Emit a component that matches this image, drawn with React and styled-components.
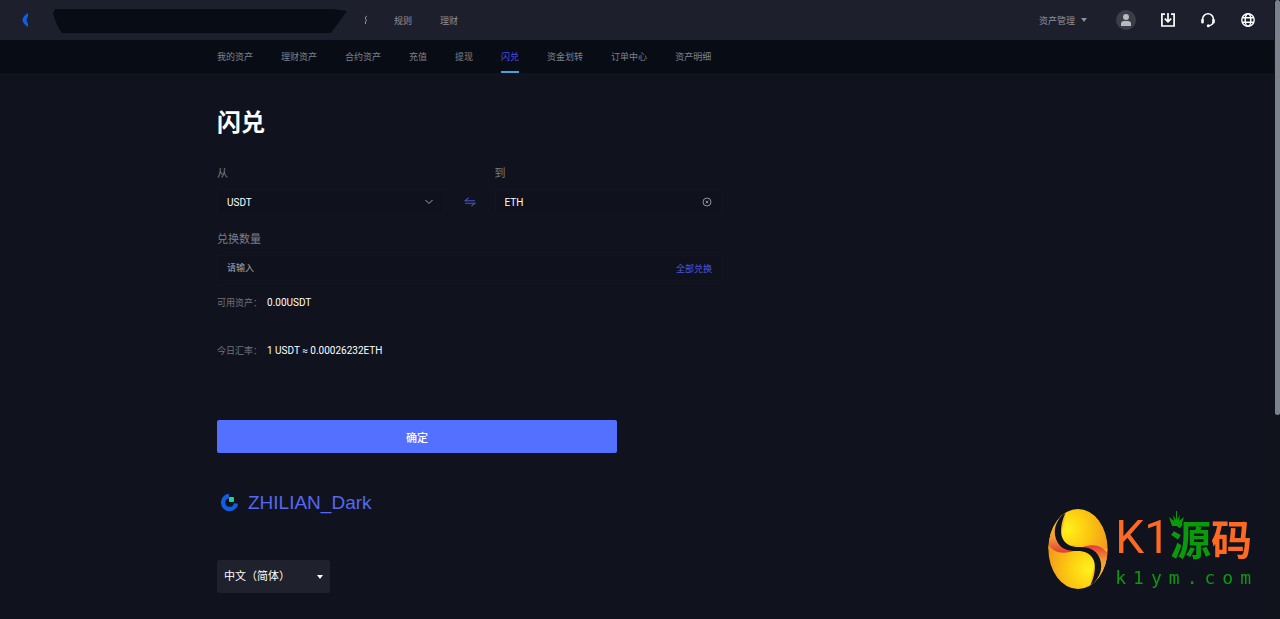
import React, { useState } from 'react';
import styled, { createGlobalStyle } from 'styled-components';

const GlobalStyle = createGlobalStyle`
  * {
    box-sizing: border-box;
  }

  body {
    margin: 0;
    background: #10131e;
    color: #ffffff;
    font-family: Roboto, 'Noto Sans CJK SC', sans-serif;
    font-size: 10px;
  }

  button, input, select {
    font: inherit;
    color: inherit;
    margin: 0;
    padding: 0;
    border: 0;
    background: none;
    outline: none;
  }

  button, select {
    cursor: pointer;
  }

  a {
    color: inherit;
    text-decoration: none;
  }
`;

const Layout = styled.div`
  display: flex;
  min-height: 100vh;
`;

const Page = styled.div`
  flex: 1;
  min-width: 0;
`;

const ScrollRail = styled.div`
  width: 6px;
  padding-left: 1px;
  background: #10131c;
`;

const ScrollThumb = styled.div`
  height: 67vh;
  border-radius: 3px;
  background: #7c828d;
`;

const TopBar = styled.header`
  display: flex;
  align-items: center;
  justify-content: space-between;
  height: 40px;
  padding: 0 18px 0 22px;
  background: #1e1f2d;
  color: #8d8f9b;
  font-size: 9px;
`;

const TopGroup = styled.div`
  display: flex;
  align-items: center;
`;

const TopLinks = styled.nav`
  display: flex;
  gap: 28px;
  margin-left: 26px;
`;

const LogoMark = styled.svg`
  width: 6px;
  height: 14px;
  margin-right: 25px;
`;

const NavPlate = styled.svg`
  width: 294px;
  height: 26px;
`;

const BraceMark = styled.svg`
  width: 4px;
  height: 10px;
  margin-left: 17px;
`;

const AssetMenu = styled.button`
  display: flex;
  align-items: center;
  gap: 6px;
  margin-right: 29px;
`;

const Caret = styled.span`
  border: 3px solid transparent;
  border-top: 4px solid currentColor;
  border-bottom: 0;
`;

const TopIcons = styled.div`
  display: flex;
  align-items: center;
  gap: 24px;
  color: #ffffff;
`;

const IconButton = styled.button`
  display: flex;
  align-items: center;
  justify-content: center;
`;

const Avatar = styled(IconButton)`
  width: 20px;
  height: 20px;
  border-radius: 50%;
  background: #3b3d49;
  color: #b9bac0;
`;

const SubNav = styled.nav`
  background: #080c14;
`;

const SubNavInner = styled.div`
  display: flex;
  gap: 28px;
  max-width: 840px;
  height: 33px;
  margin: 0 auto;
`;

const SubLink = styled.a`
  display: flex;
  align-items: center;
  border-top: 2px solid transparent;
  border-bottom: 2px solid ${({ $active }) => ($active ? '#4a9fe0' : 'transparent')};
  color: ${({ $active }) => ($active ? '#4b4ff0' : '#7f828c')};
  font-size: 9px;
  white-space: nowrap;
`;

const Main = styled.main`
  max-width: 840px;
  margin: 0 auto;
  padding: 32px 0 24px;
`;

const Title = styled.h1`
  margin: 0 0 24px;
  font-size: 24px;
  line-height: 36px;
  font-weight: 700;
`;

const Form = styled.form`
  max-width: 505px;
`;

const PairRow = styled.div`
  display: grid;
  grid-template-columns: 1fr 50px 1fr;
  align-items: end;
  margin-bottom: 16px;
`;

const Label = styled.label`
  display: block;
  margin-bottom: 6px;
  color: #7b7d88;
  font-size: 11px;
  line-height: 18px;
`;

const Field = styled.div`
  display: flex;
  align-items: center;
  height: 26px;
  padding: 0 9px;
  border: 1px solid #131621;
  border-radius: 2px;
  background: #0f121d;
`;

const CoinSelect = styled.select`
  flex: 1;
  min-width: 0;
  appearance: none;

  option {
    background: #1e1f2d;
  }
`;

const AmountInput = styled.input`
  flex: 1;
  min-width: 0;
  font-size: 9px;

  &::placeholder {
    color: #a3a5ac;
    opacity: 1;
  }
`;

const SwapButton = styled(IconButton)`
  height: 26px;
  color: #4a54c8;
`;

const AllButton = styled.button`
  color: #5156d6;
  font-size: 9px;
`;

const InfoRow = styled.p`
  display: flex;
  gap: 5px;
  margin: ${({ $gap }) => $gap}px 0 0;
  line-height: 18px;
`;

const InfoLabel = styled.span`
  color: #70727d;
  font-size: 9px;
`;

const Submit = styled.button`
  display: block;
  width: 400px;
  max-width: 100%;
  height: 33px;
  margin-top: 60px;
  border-radius: 2px;
  background: #5470ff;
  font-size: 11px;
  font-weight: 500;
`;

const Footer = styled.footer`
  margin-top: 36px;
`;

const Brand = styled.a`
  display: flex;
  align-items: center;
  gap: 9px;
  padding-left: 3px;
  color: #5468f0;
  font-family: 'Liberation Sans', Arial, sans-serif;
  font-size: 19px;
  line-height: 28px;
`;

const Language = styled.div`
  display: flex;
  align-items: center;
  width: 113px;
  height: 33px;
  margin-top: 43px;
  padding: 0 7px;
  border-radius: 2px;
  background: #1f212c;
`;

const LanguageSelect = styled.select`
  flex: 1;
  min-width: 0;
  appearance: none;
  font-size: 11px;
`;

const Watermark = styled.div`
  position: fixed;
  right: 28px;
  bottom: 29px;
  display: flex;
  align-items: center;
  gap: 7px;
  pointer-events: none;
`;

const WatermarkName = styled.div`
  position: relative;
  display: flex;
  align-items: center;
  height: 58px;
  color: #ff6a22;
  font-size: 46px;
  line-height: 58px;
`;

const WatermarkHan = styled.span`
  color: ${({ $green }) => ($green ? '#0b9a0b' : 'inherit')};
  font-family: 'Noto Sans CJK SC', sans-serif;
  font-size: 41px;
  font-weight: 700;
`;

const Crown = styled.svg`
  position: absolute;
  right: 68px;
  top: 3px;
`;

const WatermarkSite = styled.div`
  margin-right: -7px;
  color: #0b9a0b;
  font-family: 'DejaVu Sans Mono', monospace;
  font-size: 18px;
  line-height: 24px;
  letter-spacing: 7px;
`;

const links = ['我的资产', '理财资产', '合约资产', '充值', '提现', '闪兑', '资金划转', '订单中心', '资产明细'];

function UserIcon() {
  return (
    <svg width="12" height="12" viewBox="0 0 12 12" fill="currentColor">
      <circle cx="6" cy="3" r="3" />
      <path d="M1 12V10Q1 7 4 7H8Q11 7 11 10V12Z" />
    </svg>
  );
}

function DownloadIcon() {
  return (
    <svg width="16" height="16" viewBox="0 0 16 16" fill="none" stroke="currentColor" strokeWidth="1.7">
      <path d="M5 2.2H1.9V14H14.1V2.2H11M8 1V9.5M4.8 6.7L8 9.9L11.2 6.7" />
    </svg>
  );
}

function HeadsetIcon() {
  return (
    <svg width="16" height="16" viewBox="0 0 16 16" fill="none" stroke="currentColor" strokeWidth="1.5">
      <path d="M2.6 8V7.2A5.4 5.4 0 0 1 13.4 7.2V8M13.2 10Q12.7 13.2 9 13.7" />
      <path d="M2.5 8V10.2M13.5 8V10.2" strokeWidth="2.6" strokeLinecap="round" />
      <circle cx="8.3" cy="13.7" r="0.8" fill="currentColor" />
    </svg>
  );
}

function GlobeIcon() {
  return (
    <svg width="16" height="16" viewBox="0 0 16 16" fill="none" stroke="currentColor" strokeWidth="1.4">
      <circle cx="8" cy="8" r="6.2" />
      <ellipse cx="8" cy="8" rx="2.8" ry="6.2" />
      <path d="M2.3 5.8H13.7M2.3 10.2H13.7" />
    </svg>
  );
}

function SwapIcon() {
  return (
    <svg width="12" height="10" viewBox="0 0 12 10" fill="none" stroke="currentColor" strokeWidth="1.1">
      <path d="M4.6 0.8L1 3.8H11M1 6.2H11L7.4 9.2" />
    </svg>
  );
}

function BrandIcon() {
  return (
    <svg width="19" height="20" viewBox="0 0 19 20">
      <path d="M9 3A6.5 6.5 0 1 0 16 10.5" fill="none" stroke="#0f5fe0" strokeWidth="4.4" />
      <rect x="9" y="4" width="5" height="5" rx="1" fill="#17d892" />
    </svg>
  );
}

function EggLogo() {
  return (
    <svg width="60" height="80" viewBox="0 0 60 80">
      <defs>
        <radialGradient id="eggTop" gradientUnits="userSpaceOnUse" cx="19" cy="20" r="42">
          <stop offset="0" stopColor="#fff21c" />
          <stop offset="0.5" stopColor="#fcca10" />
          <stop offset="1" stopColor="#f39c1c" />
        </radialGradient>
        <radialGradient id="eggBottom" gradientUnits="userSpaceOnUse" cx="41" cy="60" r="42">
          <stop offset="0" stopColor="#fff21c" />
          <stop offset="0.5" stopColor="#fcca10" />
          <stop offset="1" stopColor="#f39c1c" />
        </radialGradient>
        <linearGradient id="eggEdge" gradientUnits="userSpaceOnUse" x1="0" y1="14" x2="0" y2="44">
          <stop offset="0" stopColor="#fbb81c" />
          <stop offset="0.5" stopColor="#f39a30" />
          <stop offset="1" stopColor="#e5383a" />
        </linearGradient>
        <clipPath id="eggShape">
          <ellipse cx="30" cy="40" rx="29.6" ry="40" />
        </clipPath>
      </defs>
      <g clipPath="url(#eggShape)">
        <rect width="60" height="40" fill="url(#eggTop)" />
        <path d="M0 36H30V40H60V80H0Z" fill="url(#eggBottom)" />
        <path d="M19 0H0V35C5 44 16 46 28 41L12 30Z" fill="url(#eggEdge)" />
        <path d="M19 0H0V35C5 44 16 46 28 41L12 30Z" fill="url(#eggEdge)" transform="rotate(180 30 40)" />
        <path
          d="M19 1C6 12 4 24 10 34C15 42 24 42 30 42C36 42 43 44 46 52C48 58 47 68 41 79C54 68 56 56 50 46C45 38 36 38 30 38C24 38 17 36 14 28C12 22 13 12 19 1Z"
          fill="#10131e"
        />
      </g>
    </svg>
  );
}

function App() {
  const [from, setFrom] = useState('USDT');
  const [to, setTo] = useState('ETH');
  const [amount, setAmount] = useState('');

  const swap = () => {
    setFrom(to);
    setTo(from);
  };

  return (
    <>
      <GlobalStyle />
      <Layout>
        <Page>
          <TopBar>
            <TopGroup>
              <LogoMark viewBox="0 0 6 14">
                <path d="M6 0Q1 3 0.5 7Q1 11 6 14V10.5Q3 7 6 3.5Z" fill="#0d5fe6" />
              </LogoMark>
              <NavPlate viewBox="0 -2 294 26">
                <path d="M2 0H280L294 2L278 24H9Q3 16 0 4Z" fill="#080c14" />
              </NavPlate>
              <BraceMark viewBox="0 0 4 10">
                <path d="M3 1L1.5 2V4L2.5 5L1.5 7V9" fill="none" stroke="#8d8f9b" />
              </BraceMark>
              <TopLinks>
                <a href="#rules">规则</a>
                <a href="#finance">理财</a>
              </TopLinks>
            </TopGroup>
            <TopGroup>
              <AssetMenu type="button">
                资产管理
                <Caret />
              </AssetMenu>
              <TopIcons>
                <Avatar type="button" aria-label="User"><UserIcon /></Avatar>
                <IconButton type="button" aria-label="Download"><DownloadIcon /></IconButton>
                <IconButton type="button" aria-label="Support"><HeadsetIcon /></IconButton>
                <IconButton type="button" aria-label="Language"><GlobeIcon /></IconButton>
              </TopIcons>
            </TopGroup>
          </TopBar>

          <SubNav>
            <SubNavInner>
              {links.map((name) => (
                <SubLink key={name} href="#assets" $active={name === '闪兑'}>{name}</SubLink>
              ))}
            </SubNavInner>
          </SubNav>

          <Main>
            <Title>闪兑</Title>
            <Form onSubmit={(e) => e.preventDefault()}>
              <PairRow>
                <div>
                  <Label htmlFor="from">从</Label>
                  <Field>
                    <CoinSelect id="from" value={from} onChange={(e) => setFrom(e.target.value)}>
                      <option>USDT</option>
                      <option>ETH</option>
                    </CoinSelect>
                    <svg width="11" height="6" viewBox="0 0 11 6" fill="none" stroke="#a3a5ac">
                      <path d="M1.5 1L5 4.5L8.5 1" />
                    </svg>
                  </Field>
                </div>
                <SwapButton type="button" aria-label="Swap" onClick={swap}><SwapIcon /></SwapButton>
                <div>
                  <Label htmlFor="to">到</Label>
                  <Field>
                    <CoinSelect id="to" value={to} onChange={(e) => setTo(e.target.value)}>
                      <option>ETH</option>
                      <option>USDT</option>
                    </CoinSelect>
                    <IconButton type="button" aria-label="Clear">
                      <svg width="10" height="10" viewBox="0 0 10 10" fill="none" stroke="#8d8f9b">
                        <circle cx="5" cy="5" r="4" />
                        <path d="M3.7 3.7L6.3 6.3M6.3 3.7L3.7 6.3" />
                      </svg>
                    </IconButton>
                  </Field>
                </div>
              </PairRow>

              <Label htmlFor="amount">兑换数量</Label>
              <Field>
                <AmountInput
                  id="amount"
                  type="text"
                  placeholder="请输入"
                  value={amount}
                  onChange={(e) => setAmount(e.target.value)}
                />
                <AllButton type="button" onClick={() => setAmount('0.00')}>全部兑换</AllButton>
              </Field>

              <InfoRow $gap={13}>
                <InfoLabel>可用资产：</InfoLabel>
                <span>0.00USDT</span>
              </InfoRow>
              <InfoRow $gap={30}>
                <InfoLabel>今日汇率：</InfoLabel>
                <span>1 USDT ≈ 0.00026232ETH</span>
              </InfoRow>

              <Submit type="submit">确定</Submit>
            </Form>

            <Footer>
              <Brand href="#home">
                <BrandIcon />
                ZHILIAN_Dark
              </Brand>
              <Language>
                <LanguageSelect aria-label="Language" defaultValue="zh">
                  <option value="zh">中文（简体）</option>
                </LanguageSelect>
                <Caret />
              </Language>
            </Footer>
          </Main>
        </Page>
        <ScrollRail>
          <ScrollThumb />
        </ScrollRail>
      </Layout>

      <Watermark>
        <EggLogo />
        <div>
          <WatermarkName>
            K1
            <WatermarkHan $green>源</WatermarkHan>
            <WatermarkHan>码</WatermarkHan>
            <Crown width="15" height="16" viewBox="0 0 15 16" fill="#0b9a0b">
              <path d="M3 15L0 6L5 10L4 4L7 9V0H8V9L11 4L10 10L15 6L12 15Z" />
            </Crown>
          </WatermarkName>
          <WatermarkSite>k1ym.com</WatermarkSite>
        </div>
      </Watermark>
    </>
  );
}

export default App;
